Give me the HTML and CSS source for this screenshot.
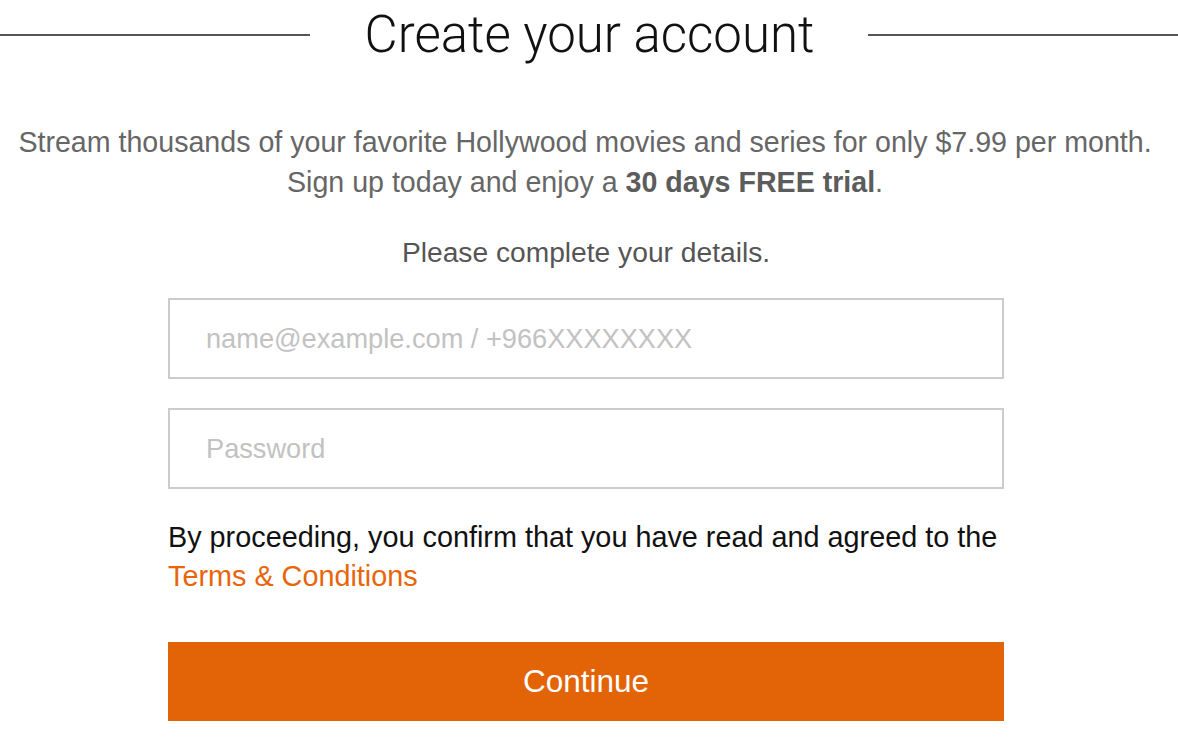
FILE: index.html
```html
<!DOCTYPE html>
<html lang="en">
<head>
<meta charset="UTF-8">
<meta name="viewport" content="width=device-width, initial-scale=1.0">
<title>Create your account</title>
<link rel="stylesheet" href="styles.css">
</head>
<body>
<div class="title-row">
    <span class="rule"></span>
    <h1>Create your account</h1>
    <span class="rule"></span>
</div>

<p class="intro">
    Stream thousands of your favorite Hollywood movies and series for only $7.99 per month.<br>
    Sign up today and enjoy a <b>30 days FREE trial</b>.
</p>

<p class="details">Please complete your details.</p>

<form class="signup-form" onsubmit="return false;">
    <input type="text" class="field" placeholder="name@example.com / +966XXXXXXXX">
    <input type="password" class="field" placeholder="Password">
    <p class="terms">
        By proceeding, you confirm that you have read and agreed to the
        <a href="#">Terms &amp; Conditions</a>
    </p>
    <button type="submit" class="continue-btn">Continue</button>
</form>
</body>
</html>
```

FILE: styles.css
```css
body {
    font-family: "Liberation Sans", Arial, sans-serif;
    margin: 0;
    padding: 0;
    background: #fff;
}
.title-row {
    display: flex;
    align-items: center;
    height: 70px;
}
.rule {
    flex: 1;
    height: 2px;
    background: #555;
}
.title-row h1 {
    margin: 0;
    padding: 0 54px 0 55px;
    font-family: Roboto, "Liberation Sans", sans-serif;
    font-weight: 300;
    font-size: 51px;
    line-height: 70px;
    color: #111;
}
.intro {
    margin: 52px 0 0;
    padding-right: 8px;
    text-align: center;
    font-size: 28.6px;
    line-height: 40px;
    color: #666;
}
.intro b {
    color: #5c5c5c;
}
.details {
    margin: 30px 0 0;
    padding-right: 6px;
    text-align: center;
    font-size: 28.2px;
    line-height: 40px;
    color: #555;
}
.signup-form {
    width: 836px;
    margin: 26px 0 0 168px;
    display: flex;
    flex-direction: column;
}
.field {
    box-sizing: border-box;
    height: 81px;
    border: 2px solid #ccc;
    padding: 0 36px;
    font-family: "Liberation Sans", Arial, sans-serif;
    font-size: 27.2px;
    color: #333;
    outline: none;
}
.field + .field {
    margin-top: 29px;
}
.field::placeholder {
    color: #c2c2c2;
}
.terms {
    margin: 29px 0 0;
    font-size: 28.8px;
    line-height: 39px;
    color: #111;
}
.terms a {
    color: #e8650a;
    text-decoration: none;
}
.continue-btn {
    margin-top: 46px;
    height: 79px;
    border: none;
    background: #e36406;
    color: #fff;
    font-family: "Liberation Sans", Arial, sans-serif;
    font-size: 31.5px;
    cursor: pointer;
}
```
